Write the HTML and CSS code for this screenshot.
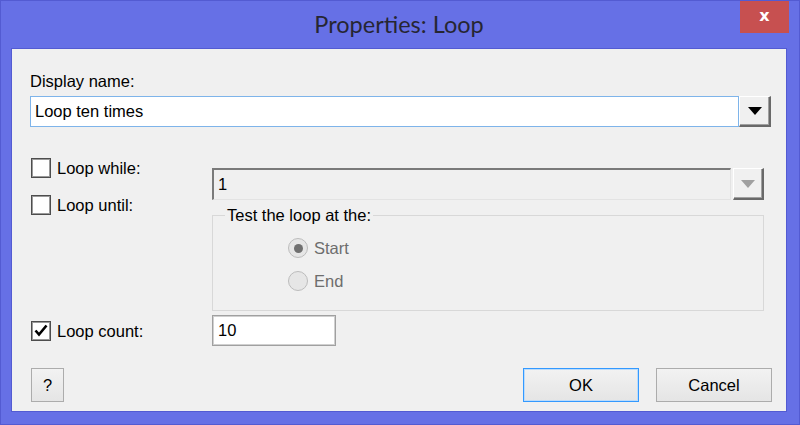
FILE: index.html
```html
<!DOCTYPE html>
<html lang="en">
<head>
    <meta charset="UTF-8">
    <meta name="viewport" content="width=device-width, initial-scale=1.0">
    <title>Properties: Loop</title>
    <link rel="stylesheet" href="styles.css">
</head>
<body>
    <div class="window" role="dialog" aria-label="Properties: Loop">
        <div class="titlebar">
            <span class="title">Properties: Loop</span>
            <button class="close" aria-label="Close">x</button>
        </div>
        <div class="client">
            <label class="field-label" for="displayName">Display name:</label>
            <div class="combo">
                <input type="text" id="displayName" class="combo-input" value="Loop ten times">
                <span class="drop-btn">
                    <svg width="14" height="8" viewBox="0 0 14 8"><path d="M0 0H14L7 8Z" fill="#000"/></svg>
                </span>
            </div>

            <div class="options">
                <div class="checks">
                    <label class="check"><span class="box"></span>Loop while:</label>
                    <label class="check"><span class="box"></span>Loop until:</label>
                </div>
                <div class="condition">
                    <div class="combo combo-disabled">
                        <span class="sunken">1</span>
                        <span class="drop-btn">
                            <svg width="14" height="8" viewBox="0 0 14 8"><path d="M0 0H14L7 8Z" fill="#a0a0a0"/></svg>
                        </span>
                    </div>
                    <fieldset class="group">
                        <legend>Test the loop at the:</legend>
                        <div class="radios">
                            <label class="radio"><span class="dot checked"></span>Start</label>
                            <label class="radio"><span class="dot"></span>End</label>
                        </div>
                    </fieldset>
                </div>
            </div>

            <div class="count-row">
                <label class="check"><span class="box">
                    <svg width="14" height="13" viewBox="0 0 14 13"><path d="M1.5 6.5L5 10.5L12.5 1.5" fill="none" stroke="#000" stroke-width="2.6"/></svg>
                </span>Loop count:</label>
                <input type="text" class="count-input" value="10">
            </div>

            <div class="footer">
                <button class="btn btn-help">?</button>
                <span class="spacer"></span>
                <button class="btn btn-default">OK</button>
                <button class="btn">Cancel</button>
            </div>
        </div>
    </div>
</body>
</html>
```

FILE: styles.css
```css
body {
    margin: 0;
    background-color: #6670e6;
    font-family: "Liberation Sans", Arial, sans-serif;
    font-size: 16.5px;
    color: #000;
    overflow: hidden;
}
.window {
    box-sizing: border-box;
    width: 800px;
    height: 425px;
    border: 1px solid #535bd2;
    background-color: #6670e6;
    position: relative;
}
.titlebar {
    height: 47px;
    display: flex;
    justify-content: center;
    align-items: flex-start;
}
.title {
    font-family: Lato, "Liberation Sans", sans-serif;
    font-size: 23.5px;
    color: #262633;
    margin-top: 9px;
    margin-left: -2px;
}
.close {
    position: absolute;
    top: 0;
    right: 10px;
    width: 49px;
    height: 32px;
    border: none;
    background-color: #c75050;
    color: #fff;
    font-family: "DejaVu Sans", sans-serif;
    font-size: 16px;
    font-weight: bold;
    padding: 0 0 3px;
}
.client {
    margin: 0 12px 0 10px;
    height: 364px;
    box-sizing: border-box;
    border: 1px solid #535bd2;
    background-color: #f0f0f0;
    padding: 23px 14px 0 18px;
    display: flex;
    flex-direction: column;
}
.field-label {
    line-height: 18px;
}
.combo {
    display: flex;
    margin-top: 6px;
}
.combo-input {
    width: 709px;
    height: 31px;
    box-sizing: border-box;
    border: 1px solid #7eb4ea;
    padding: 0 4px;
    font: inherit;
    outline: none;
}
.drop-btn {
    width: 32px;
    height: 31px;
    box-sizing: border-box;
    display: flex;
    align-items: center;
    justify-content: center;
    background-color: #f0f0f0;
    border-top: 1px solid #fff;
    border-left: 1px solid #fff;
    border-right: 2px solid #696969;
    border-bottom: 2px solid #696969;
    box-shadow: inset -1px -1px 0 #a0a0a0;
}
.options {
    display: flex;
    margin-top: 31px;
}
.checks {
    width: 182px;
    display: flex;
    flex-direction: column;
    gap: 17px;
}
.check {
    display: flex;
    align-items: center;
    gap: 6px;
    height: 20px;
    line-height: 18px;
    padding-left: 1px;
}
.box {
    width: 20px;
    height: 20px;
    box-sizing: border-box;
    border: 1px solid #4d4d4d;
    box-shadow: inset 0 0 0 1px #9a9a9a;
    background-color: #fff;
    display: flex;
    align-items: center;
    justify-content: center;
}
.condition {
    margin-top: 10px;
    width: 552px;
}
.combo-disabled {
    margin-top: 0;
    gap: 2px;
}
.sunken {
    width: 519px;
    height: 32px;
    box-sizing: border-box;
    border-top: 2px solid #7a7a7a;
    border-left: 2px solid #7a7a7a;
    border-right: 1px solid #e3e3e3;
    border-bottom: 1px solid #e3e3e3;
    padding: 5px 4px 0;
    line-height: 18px;
    color: #000;
}
.combo-disabled .drop-btn {
    width: 31px;
    height: 32px;
}
.group {
    margin: 6px 0 0;
    padding: 0 0 0 12px;
    border: 1px solid #d8d8d8;
    height: 105px;
    box-sizing: border-box;
}
.group legend {
    padding: 0 2px;
    line-height: 18px;
}
.radios {
    display: flex;
    flex-direction: column;
    gap: 13px;
    padding: 14px 0 0 63px;
}
.radio {
    display: flex;
    align-items: center;
    gap: 6px;
    height: 20px;
    color: #6d6d6d;
}
.dot {
    width: 20px;
    height: 20px;
    box-sizing: border-box;
    border-radius: 50%;
    border: 1px solid #bcbcbc;
    background-color: #e6e6e6;
    display: flex;
    align-items: center;
    justify-content: center;
}
.dot.checked::after {
    content: '';
    width: 9px;
    height: 9px;
    border-radius: 50%;
    background-color: #707070;
}
.count-row {
    display: flex;
    align-items: center;
    margin-top: 4px;
}
.count-row .check {
    width: 181px;
}
.count-input {
    width: 124px;
    height: 31px;
    box-sizing: border-box;
    border: 1px solid #a0a0a0;
    box-shadow: inset 0 0 0 1px #d0d0d0;
    padding: 0 5px;
    font: inherit;
    outline: none;
}
.footer {
    display: flex;
    margin-top: 22px;
    gap: 17px;
    padding-left: 1px;
}
.spacer {
    flex: 1;
}
.btn {
    width: 116px;
    height: 34px;
    border: 1px solid #acacac;
    background: linear-gradient(#f2f2f2, #e5e5e5);
    font: inherit;
    color: #000;
    padding: 0;
}
.btn-help {
    width: 33px;
}
.btn-default {
    border-color: #3399ff;
    box-shadow: inset 0 0 0 1px #bcdcfb;
}
```
